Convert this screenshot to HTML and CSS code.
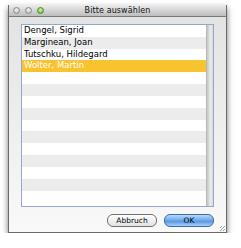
FILE: index.html
```html
<!DOCTYPE html>
<html>
  <head>
    <meta charset="utf-8" />
    <title>Bitte auswählen</title>
    <link rel="stylesheet" href="styles.css">
  </head>
  <body>
    <div class="window">
      <div class="titlebar">
        <div class="lights">
          <span class="light"></span>
          <span class="light"></span>
          <span class="light green"></span>
        </div>
        <div class="title">Bitte auswählen</div>
      </div>

      <div class="content">
        <div class="list">
          <div class="rows">
            <div class="row">Dengel, Sigrid</div>
            <div class="row">Marginean, Joan</div>
            <div class="row">Tutschku, Hildegard</div>
            <div class="row selected">Wolter, Martin</div>
            <div class="row"></div>
            <div class="row"></div>
            <div class="row"></div>
            <div class="row"></div>
            <div class="row"></div>
            <div class="row"></div>
            <div class="row"></div>
            <div class="row"></div>
            <div class="row"></div>
            <div class="row"></div>
            <div class="row"></div>
          </div>
          <div class="scrollbar"></div>
        </div>

        <div class="buttons">
          <div class="button">Abbruch</div>
          <div class="button default">OK</div>
        </div>
      </div>
      <div class="grip"></div>
    </div>
  </body>
</html>
```

FILE: styles.css
```css
* {
  margin: 0;
  padding: 0;
  box-sizing: border-box;
}

body {
  font-family: "DejaVu Sans", "Liberation Sans", sans-serif;
  background-color: #fff;
  padding: 5px 0 0 8px;
}

.window {
  width: 219px;
  height: 228px;
  background: linear-gradient(#e2e2e2, #f9f9f9);
  border: 1px solid #6a6a6a;
  border-top: none;
  box-shadow: 0 3px 6px rgba(0, 0, 0, 0.55);
  display: flex;
  flex-direction: column;
  position: relative;
}

.titlebar {
  height: 12px;
  background: linear-gradient(#ececec, #bdbdbd);
  border-bottom: 1px solid #7a7a7a;
  display: flex;
  align-items: center;
  position: relative;
}

.lights {
  display: flex;
  gap: 5px;
  padding-left: 4px;
}

.light {
  width: 7px;
  height: 7px;
  border-radius: 50%;
  background: radial-gradient(circle at 50% 35%, #f4f4f4, #b4b4b4);
  border: 1px solid #8c8c8c;
}

.light.green {
  background: radial-gradient(circle at 50% 35%, #d6f7a4, #59b233);
  border-color: #4c8a2c;
}

.title {
  position: absolute;
  left: 0;
  right: 0;
  text-align: center;
  font-size: 8px;
  color: #111;
  letter-spacing: 0.1px;
}

.content {
  flex-grow: 1;
  display: flex;
  flex-direction: column;
  padding: 7px 12px 0 12px;
}

.list {
  height: 183px;
  border: 1px solid #8fa9cf;
  background-color: #fff;
  display: flex;
  overflow: hidden;
}

.rows {
  flex-grow: 1;
}

.row {
  height: 11.83px;
  font-size: 8.5px;
  line-height: 11.83px;
  padding-left: 2px;
  color: #000;
  white-space: nowrap;
}

.row:nth-child(even) {
  background-color: #ececec;
}

.row.selected {
  background-color: #f7c32f;
  color: #fff;
}

.scrollbar {
  width: 7px;
  background: linear-gradient(90deg, #c6c6c6, #ececec 60%, #d8d8d8);
  border-left: 1px solid #b8b8b8;
}

.buttons {
  display: flex;
  justify-content: flex-end;
  gap: 7px;
  margin-top: 7px;
}

.button {
  width: 50px;
  height: 13px;
  border: 1px solid #707070;
  border-radius: 6px;
  background: linear-gradient(#ffffff, #e2e2e2);
  font-size: 7.5px;
  line-height: 11px;
  text-align: center;
  color: #000;
}

.button.default {
  background: linear-gradient(#b9d9f8, #6aa7e6 50%, #4d8fdc 51%, #a5d0fb);
  border-color: #3d6aa8;
}

.grip {
  position: absolute;
  right: 1px;
  bottom: 1px;
  width: 5px;
  height: 5px;
  background: repeating-linear-gradient(135deg, transparent 0 1px, #a0a0a0 1px 2px);
}
```
